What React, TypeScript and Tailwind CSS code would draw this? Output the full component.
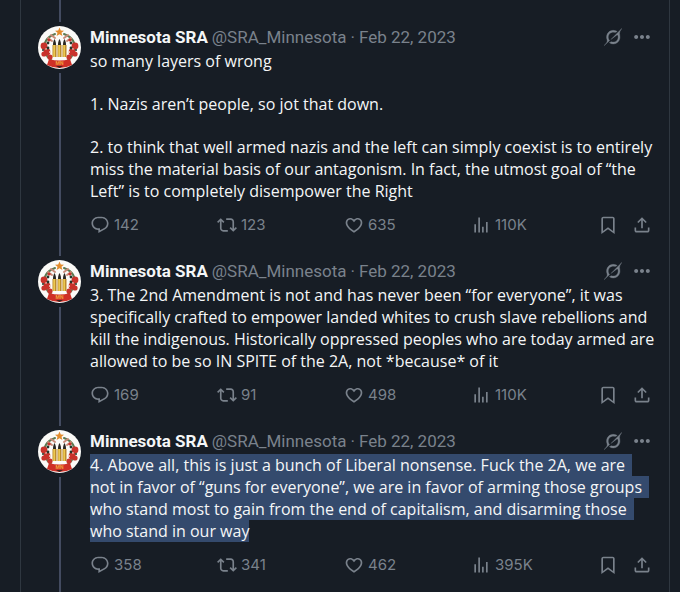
import type { ReactNode } from "react";

interface Post {
    id: number;
    paragraphs: string[][];
    selected?: boolean;
    replies: string;
    reposts: string;
    likes: string;
    views: string;
}

const posts: Post[] = [
    {
        id: 1,
        paragraphs: [
            ["so many layers of wrong"],
            ["1. Nazis aren’t people, so jot that down."],
            [
                "2. to think that well armed nazis and the left can simply coexist is to entirely",
                "miss the material basis of our antagonism. In fact, the utmost goal of “the",
                "Left” is to completely disempower the Right",
            ],
        ],
        replies: "142",
        reposts: "123",
        likes: "635",
        views: "110K",
    },
    {
        id: 2,
        paragraphs: [
            [
                "3. The 2nd Amendment is not and has never been “for everyone”, it was",
                "specifically crafted to empower landed whites to crush slave rebellions and",
                "kill the indigenous. Historically oppressed peoples who are today armed are",
                "allowed to be so IN SPITE of the 2A, not *because* of it",
            ],
        ],
        replies: "169",
        reposts: "91",
        likes: "498",
        views: "110K",
    },
    {
        id: 3,
        paragraphs: [
            [
                "4. Above all, this is just a bunch of Liberal nonsense. Fuck the 2A, we are",
                "not in favor of “guns for everyone”, we are in favor of arming those groups",
                "who stand most to gain from the end of capitalism, and disarming those",
                "who stand in our way",
            ],
        ],
        selected: true,
        replies: "358",
        reposts: "341",
        likes: "462",
        views: "395K",
    },
];

const icons = {
    reply: "M1.751 10c0-4.42 3.584-8 8.005-8h4.366c4.49 0 8.129 3.64 8.129 8.13 0 2.96-1.607 5.68-4.196 7.11l-8.054 4.46v-3.69h-.067c-4.49.1-8.183-3.51-8.183-8.01zm8.005-6c-3.317 0-6.005 2.69-6.005 6 0 3.37 2.77 6.08 6.138 6.01l.351-.01h1.761v2.3l5.087-2.81c1.951-1.08 3.163-3.13 3.163-5.36 0-3.39-2.744-6.13-6.129-6.13H9.756z",
    repost: "M4.5 3.88l4.432 4.14-1.364 1.46L5.5 7.55V16c0 1.1.896 2 2 2H13v2H7.5c-2.209 0-4-1.79-4-4V7.55L1.432 9.48.068 8.02 4.5 3.88zM16.5 6H11V4h5.5c2.209 0 4 1.79 4 4v8.45l2.068-1.93 1.364 1.46-4.432 4.14-4.432-4.14 1.364-1.46 2.068 1.93V8c0-1.1-.896-2-2-2z",
    like: "M16.697 5.5c-1.222-.06-2.679.51-3.89 2.16l-.805 1.09-.806-1.09C9.984 6.01 8.526 5.44 7.304 5.5c-1.243.07-2.349.78-2.91 1.91-.552 1.12-.633 2.78.479 4.82 1.074 1.97 3.257 4.27 7.129 6.61 3.87-2.34 6.052-4.64 7.126-6.61 1.111-2.04 1.03-3.7.477-4.82-.561-1.13-1.666-1.84-2.908-1.91zm4.187 7.69c-1.351 2.48-4.001 5.12-8.379 7.67l-.503.3-.504-.3c-4.379-2.55-7.029-5.19-8.382-7.67-1.36-2.5-1.41-4.86-.514-6.67.887-1.79 2.647-2.91 4.601-3.01 1.651-.09 3.368.56 4.798 2.01 1.429-1.45 3.146-2.1 4.796-2.01 1.954.1 3.714 1.22 4.601 3.01.896 1.81.846 4.17-.514 6.67z",
    views: "M8.75 21V3h2v18h-2zM18 21V8.5h2V21h-2zM4 21l.004-10h2L6 21H4zm9.248 0v-7h2v7h-2z",
    bookmark: "M4 4.5C4 3.12 5.119 2 6.5 2h11C18.881 2 20 3.12 20 4.5v18.44l-8-5.71-8 5.71V4.5zM6.5 4c-.276 0-.5.22-.5.5v14.56l6-4.29 6 4.29V4.5c0-.28-.224-.5-.5-.5h-11z",
    share: "M12 2.59l5.7 5.7-1.41 1.42L13 6.41V16h-2V6.41l-3.3 3.3-1.41-1.42L12 2.59zM21 15l-.02 3.51c0 1.38-1.12 2.49-2.5 2.49H5.5C4.11 21 3 19.88 3 18.5V15h2v3.5c0 .28.22.5.5.5h12.98c.28 0 .5-.22.5-.5L19 15h2z",
    more: "M2.6 12c0-1.3 1.1-2.4 2.4-2.4s2.4 1.1 2.4 2.4-1.1 2.4-2.4 2.4-2.4-1.1-2.4-2.4zm9.4 2.4c1.3 0 2.4-1.1 2.4-2.4s-1.1-2.4-2.4-2.4-2.4 1.1-2.4 2.4 1.1 2.4 2.4 2.4zm7 0c1.3 0 2.4-1.1 2.4-2.4s-1.1-2.4-2.4-2.4-2.4 1.1-2.4 2.4 1.1 2.4 2.4 2.4z",
};

const Icon = ({ name }: { name: keyof typeof icons }) => (
    <svg className="size-5 shrink-0" viewBox="0 0 24 24" fill="currentColor" aria-hidden="true">
        <path d={icons[name]} />
    </svg>
);

const GrokIcon = () => (
    <svg className="size-[18px]" viewBox="0 0 33 32" fill="currentColor" stroke="currentColor" strokeWidth="0.6" aria-hidden="true">
        <path d="M12.745 20.54l10.97-8.19c.539-.4 1.307-.244 1.564.38 1.349 3.288.746 7.241-1.938 9.955-2.683 2.714-6.417 3.31-9.83 1.954l-3.728 1.745c5.347 3.697 11.84 2.782 15.898-1.324 3.219-3.255 4.216-7.692 3.284-11.693l.008.009c-1.351-5.878.332-8.227 3.782-13.031L33 0l-4.54 4.59v-.014L12.743 20.544m-2.263 1.987c-3.837-3.707-3.175-9.446.1-12.755 2.42-2.449 6.388-3.448 9.852-1.979l3.72-1.737c-.67-.49-1.53-1.017-2.515-1.387-4.455-1.854-9.789-.931-13.41 2.728-3.483 3.523-4.579 8.94-2.697 13.561 1.405 3.454-.899 5.898-3.22 8.364C1.49 30.2.666 31.074 0 32l10.478-9.466" />
    </svg>
);

// Wreath with three cartridges, a star on top and a red ribbon below
const Avatar = () => (
    <svg className="my-1 size-[43px] shrink-0" viewBox="0 0 43 43" role="img" aria-label="Minnesota SRA">
        <circle cx="21.5" cy="21.5" r="21.5" fill="#fbfaf7" />
        <g fill="none" strokeLinecap="round">
            <path d="M17 8C9 11 5 17 7 25c1 4 3 7 6 9" stroke="#5c7a52" strokeWidth="2" />
            <path d="M26 8c8 3 12 9 10 17-1 4-3 7-6 9" stroke="#5c7a52" strokeWidth="2" />
            <path d="M13 9l4 3M10 12l4 3M30 9l-4 3M33 12l-4 3" stroke="#c98b78" strokeWidth="2" />
        </g>
        <g fill="#c8322b">
            <circle cx="6" cy="20" r="3.4" />
            <circle cx="9" cy="26" r="3.4" />
            <circle cx="6" cy="28" r="2.6" />
            <circle cx="12" cy="31" r="2.6" />
            <circle cx="37" cy="20" r="3.4" />
            <circle cx="34" cy="26" r="3.4" />
            <circle cx="37" cy="28" r="2.6" />
            <circle cx="31" cy="31" r="2.6" />
            <circle cx="11" cy="14" r="1.6" />
            <circle cx="32" cy="14" r="1.6" />
        </g>
        <g fill="#26362a">
            <circle cx="10" cy="17" r="1.4" />
            <circle cx="10" cy="22" r="1.4" />
            <circle cx="5" cy="24" r="1" />
            <circle cx="33" cy="17" r="1.4" />
            <circle cx="33" cy="22" r="1.4" />
            <circle cx="38" cy="24" r="1" />
        </g>
        <g fill="#f3d9cf">
            <circle cx="12" cy="26" r="1" />
            <circle cx="8" cy="23" r=".8" />
            <circle cx="31" cy="26" r="1" />
            <circle cx="35" cy="23" r=".8" />
        </g>
        <path d="M21.5 1.5l1.3 3 3.2.2-2.5 2.1.9 3.2-2.9-1.8-2.9 1.8.9-3.2L17 4.7l3.2-.2z" fill="#e38b2c" />
        <path d="M14.5 19h4v12h-4zM19.5 19h4v12h-4zM24.5 19h4v12h-4z" fill="#b98528" />
        <path d="M16.2 19v12M21.2 19v12M26.200 19v12" stroke="#ecc850" strokeWidth="1.8" />
        <path d="M15 19c0-3 .5-4 1.500-6 1 2 1.500 3 1.500 6zM20 19c0-3 .5-4 1.500-6 1 2 1.500 3 1.500 6zM25 19c0-3 .5-4 1.500-6 1 2 1.500 3 1.500 6z" fill="#2b2722" />
        <path d="M11 33q10.500 3 21 0l2 6q-6 3-12.500 3T9 39z" fill="#cf2f26" />
        <path d="M18 40h7l-3.500 2z" fill="#3a2320" />
        <text x="21.5" y="39" textAnchor="middle" fontSize="5" fontWeight="700" fill="#f0a23c">MN</text>
    </svg>
);

const Action = ({ label, count, children }: { label: string; count: string; children: ReactNode }) => (
    <div className="flex-1">
        <button aria-label={`${count} ${label}`} className="flex h-5 items-center gap-1 font-['Inter',sans-serif] text-[15px] leading-5">
            {children}
            <span>{count}</span>
        </button>
    </div>
);

const PostItem = ({ post }: { post: Post }) => (
    <article className="flex gap-[9px] last:flex-1">
        {/* Thread line and avatar */}
        <div className="flex w-[43px] shrink-0 flex-col items-center">
            <div className="h-[9px] w-0.5 bg-[#434b60]" />
            <Avatar />
            <div className="w-0.5 flex-1 bg-[#434b60]" />
        </div>

        <div className="min-w-0 flex-1 pt-[13px] pb-3">
            <header className="flex h-[22px] items-center justify-between text-[17px] leading-[22px] text-[#7a828c]">
                <div className="flex gap-1 whitespace-nowrap">
                    <a href="#profile" className="font-bold text-[#f4f6f7]">Minnesota SRA</a>
                    <a href="#profile">@SRA_Minnesota</a>
                    <span>·</span>
                    <a href="#post"><time dateTime="2023-02-22">Feb 22, 2023</time></a>
                </div>
                <div className="flex items-center gap-[10px]">
                    <button aria-label="Grok"><GrokIcon /></button>
                    <button aria-label="More"><Icon name="more" /></button>
                </div>
            </header>

            <div className="mt-[2px] flex flex-col gap-[21px] font-['Open_Sans',sans-serif] text-base leading-[22px] whitespace-nowrap text-[#f4f6f7]">
                {post.paragraphs.map((lines) => (
                    <p key={lines[0]}>
                        {lines.map((line, i) => (
                            <span
                                key={line}
                                className={
                                    post.selected
                                        ? i < lines.length - 1
                                            ? "block w-fit bg-[#344a6d] pr-[7px]"
                                            : "block w-fit bg-[#344a6d]"
                                        : "block"
                                }
                            >
                                {line}
                            </span>
                        ))}
                    </p>
                ))}
            </div>

            <footer className="mt-[13px] flex text-[#7a828c]">
                <Action label="replies" count={post.replies}><Icon name="reply" /></Action>
                <Action label="reposts" count={post.reposts}><Icon name="repost" /></Action>
                <Action label="likes" count={post.likes}><Icon name="like" /></Action>
                <Action label="views" count={post.views}><Icon name="views" /></Action>
                <div className="flex gap-[14px]">
                    <button aria-label="Bookmark"><Icon name="bookmark" /></button>
                    <button aria-label="Share"><Icon name="share" /></button>
                </div>
            </footer>
        </div>
    </article>
);

const App = () => {
    return (
        <div className="bg-[#171d25] pr-[10px] pl-5 font-['Roboto',sans-serif]">
            <main className="flex min-h-screen flex-col border-x border-[#2f3740] px-[17px]">
                {/* Tail of the thread line coming from the post above */}
                <div className="flex h-[13px] w-[43px] justify-center">
                    <div className="w-0.5 bg-[#434b60]" />
                </div>
                {posts.map((post) => (
                    <PostItem key={post.id} post={post} />
                ))}
            </main>
        </div>
    );
};

export default App;
